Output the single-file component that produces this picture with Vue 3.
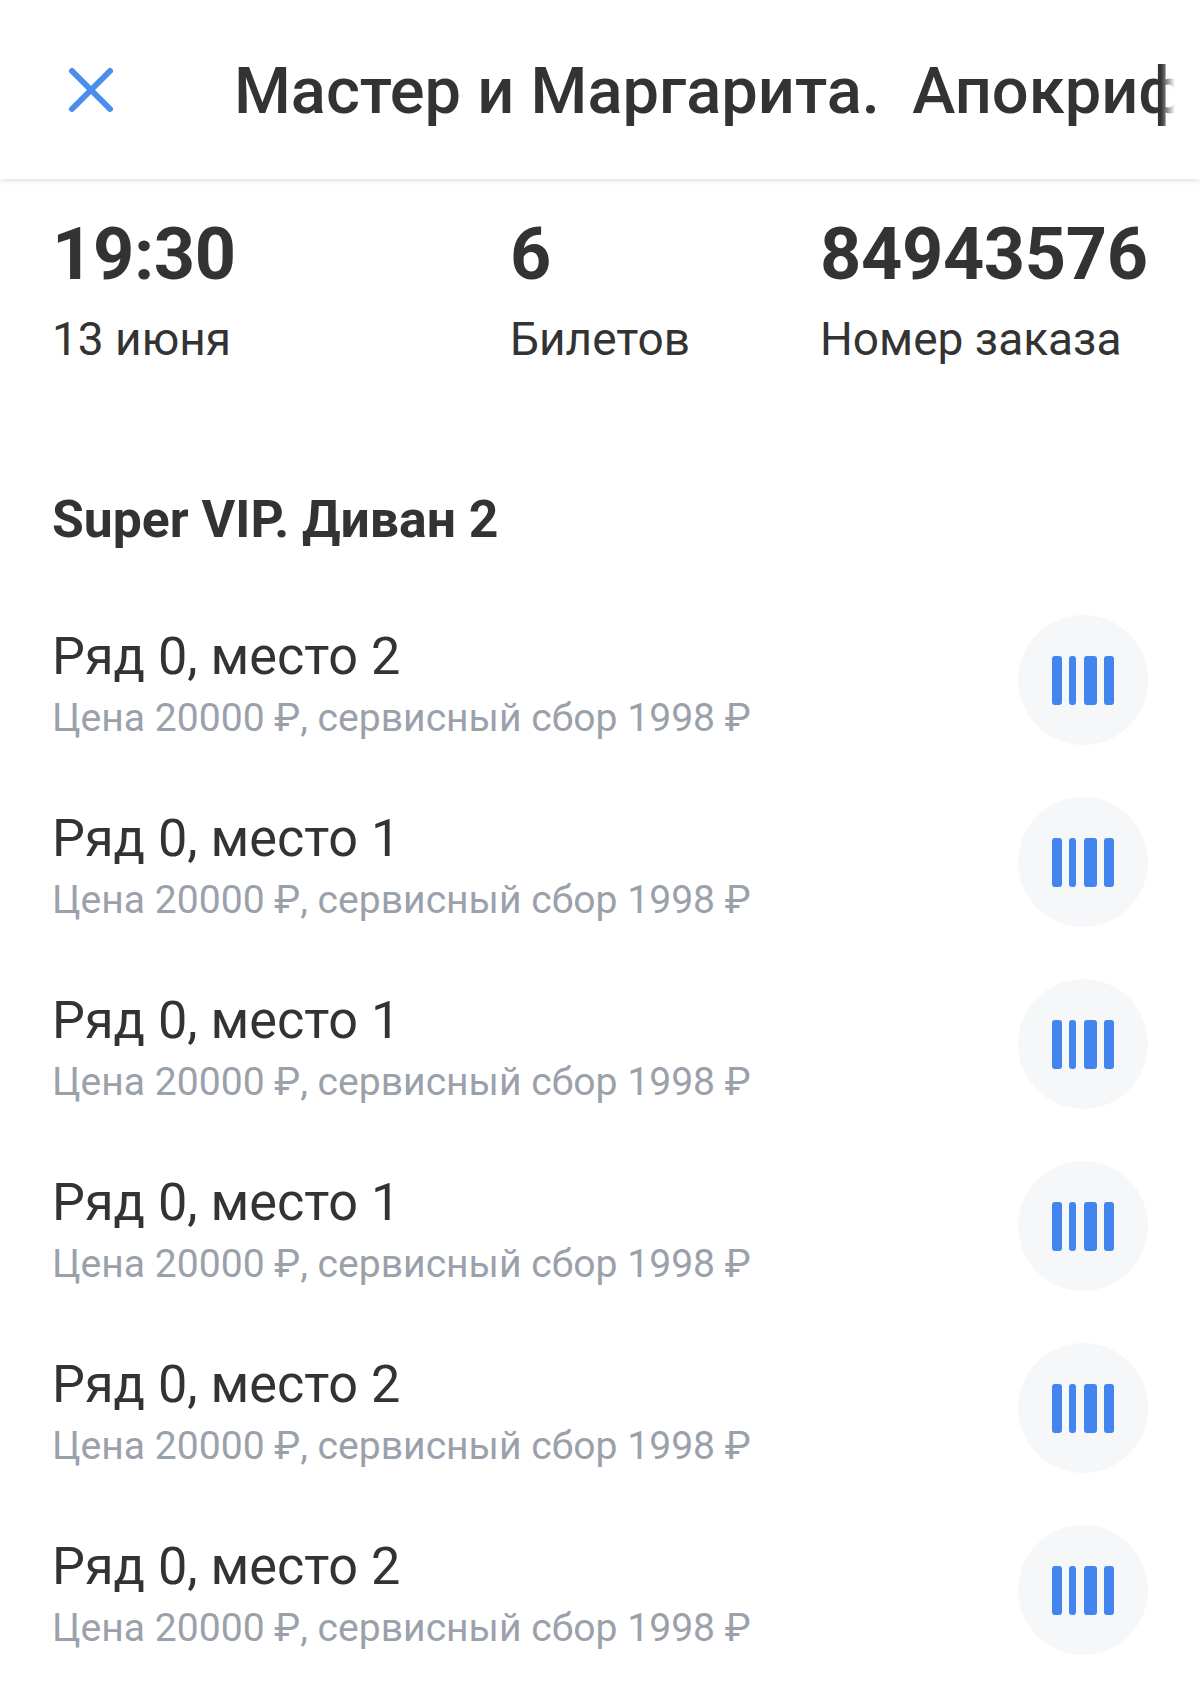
<template>
  <div class="order-screen">
    <header class="top-bar">
      <button class="close-btn" aria-label="Закрыть">
        <svg width="48" height="48" viewBox="0 0 48 48" fill="none">
          <path d="M5 5 L43 43 M43 5 L5 43" stroke="#4a8ded" stroke-width="6" stroke-linecap="round" />
        </svg>
      </button>
      <div class="title-wrap">
        <span class="title">Мастер и Маргарита.&nbsp;&nbsp;Апокриф</span>
      </div>
    </header>

    <section class="stats">
      <div class="stat" v-for="stat in stats" :key="stat.label">
        <div class="stat-value">{{ stat.value }}</div>
        <div class="stat-label">{{ stat.label }}</div>
      </div>
    </section>

    <h2 class="zone-name">Super VIP. Диван 2</h2>

    <ul class="tickets">
      <li class="ticket" v-for="(seat, i) in seats" :key="i">
        <div class="ticket-info">
          <div class="ticket-seat">Ряд 0, место {{ seat }}</div>
          <div class="ticket-price">Цена 20000 ₽, сервисный сбор 1998 ₽</div>
        </div>
        <button class="barcode-btn" aria-label="Штрихкод">
          <span class="bar bar-md"></span>
          <span class="bar bar-sm"></span>
          <span class="bar bar-lg"></span>
          <span class="bar bar-md"></span>
        </button>
      </li>
    </ul>
  </div>
</template>

<script setup>
const stats = [
  { value: '19:30', label: '13 июня' },
  { value: '6', label: 'Билетов' },
  { value: '84943576', label: 'Номер заказа' }
]

const seats = [2, 1, 1, 1, 2, 2]
</script>

<style>
html,
body {
  margin: 0;
  background: #fff;
}
</style>

<style scoped>
.order-screen {
  width: 1200px;
  height: 1701px;
  overflow: hidden;
  background: #fff;
  font-family: Roboto, "Noto Sans", sans-serif;
  color: #333;
}

.top-bar {
  display: flex;
  align-items: center;
  height: 179px;
  padding-left: 67px;
  box-shadow: 0 1px 6px rgba(0, 0, 0, 0.16);
}

.close-btn {
  display: flex;
  width: 48px;
  height: 48px;
  padding: 0;
  border: 0;
  background: none;
}

.title-wrap {
  width: 941px;
  margin: 2px 0 0 119px;
  overflow: hidden;
  white-space: nowrap;
  -webkit-mask-image: linear-gradient(to right, #000 98.5%, transparent 100%);
  mask-image: linear-gradient(to right, #000 98.5%, transparent 100%);
}

.title {
  font-size: 65px;
  font-weight: 500;
  line-height: 84px;
}

.stats {
  display: grid;
  grid-template-columns: 458px 310px auto;
  padding: 36px 0 0 52px;
}

.stat-value {
  font-size: 72px;
  font-weight: 700;
  line-height: 80px;
  letter-spacing: -0.35px;
}

.stat-label {
  margin-top: 17px;
  font-size: 46px;
  line-height: 54px;
}

.zone-name {
  margin: 124px 0 0 52px;
  font-size: 51.7px;
  font-weight: 700;
  line-height: 60px;
}

.tickets {
  display: flex;
  flex-direction: column;
  gap: 52px;
  margin: 65px 0 0;
  padding: 0 52px;
  list-style: none;
}

.ticket {
  display: flex;
  align-items: center;
  justify-content: space-between;
  height: 130px;
}

.ticket-info {
  padding-top: 9px;
}

.ticket-seat {
  font-size: 52.2px;
  line-height: 58px;
}

.ticket-price {
  margin-top: 8px;
  font-size: 39.1px;
  line-height: 48px;
  color: #9ba1ab;
}

.barcode-btn {
  display: flex;
  align-items: center;
  justify-content: center;
  gap: 7.5px;
  width: 130px;
  height: 130px;
  padding: 0;
  border: 0;
  border-radius: 50%;
  background: #f5f7f9;
}

.bar {
  height: 49px;
  border-radius: 3px;
  background: #4285ee;
}

.bar-sm {
  width: 7px;
}

.bar-md {
  width: 10px;
}

.bar-lg {
  width: 13px;
}
</style>
